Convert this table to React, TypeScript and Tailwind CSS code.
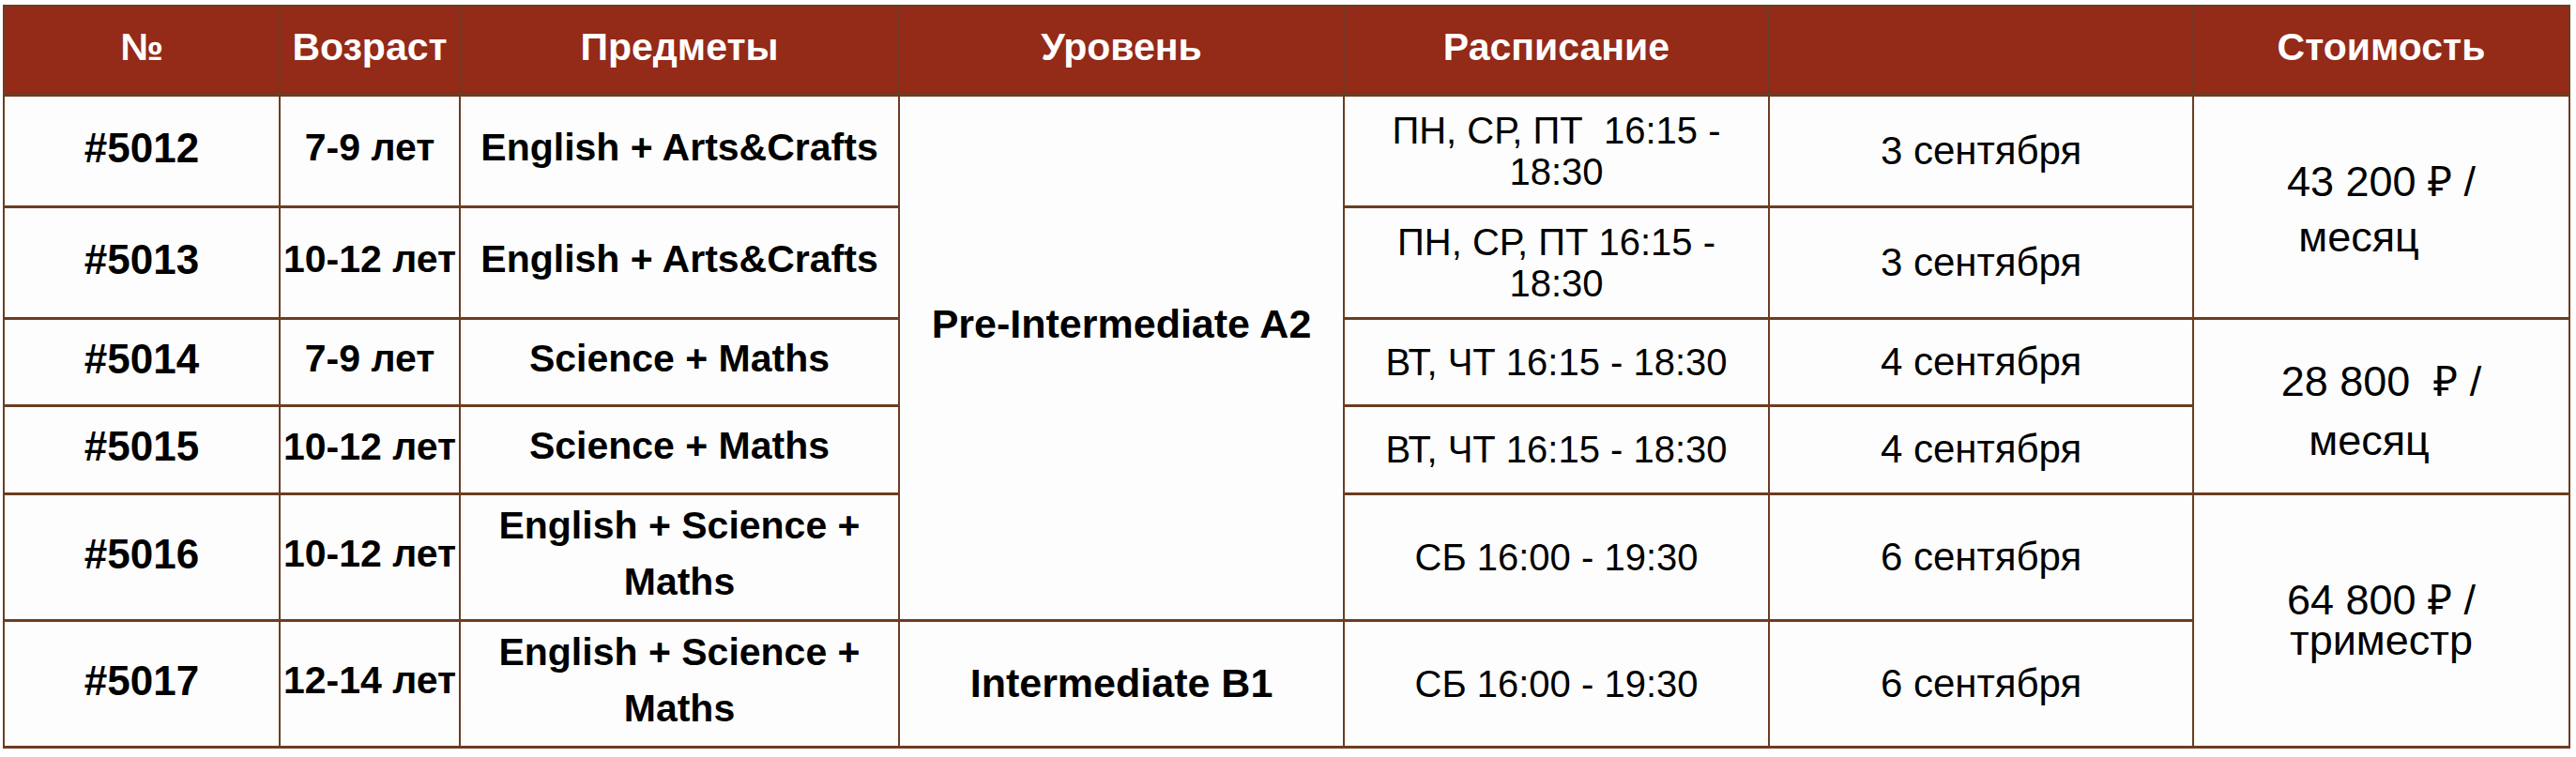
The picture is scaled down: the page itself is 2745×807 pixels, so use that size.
import React from "react";

const font = "font-['Liberation_Sans',Arial,sans-serif]";
const cell =
  "border-x-2 border-y-[3px] border-[#6b3d22] bg-[#fdfdfd] text-center align-middle p-0 text-black";
const head =
  "border-x-2 border-y-2 border-[#6b3d22] bg-[#942a18] text-center align-middle p-0 text-white font-bold text-[41px] leading-none";

const idC = `${cell} font-bold text-[44px] leading-none`;
const ageC = `${cell} font-bold text-[41px] leading-none whitespace-nowrap`;
const subjC = `${cell} font-bold text-[41px] leading-[60px] pb-[8px]`;
const schedC = `${cell} text-[40px] leading-[44px]`;
const dateC = `${cell} text-[42px] leading-none`;
const priceC = `${cell} text-[45px]`;

export default function App() {
  return (
    <div className={`${font} bg-white w-[2745px] h-[807px] pt-[5px] pl-[3px]`}>
      <table className="table-fixed border-collapse w-[2736px]">
        <colgroup>
          <col className="w-[294px]" />
          <col className="w-[192px]" />
          <col className="w-[468px]" />
          <col className="w-[474px]" />
          <col className="w-[453px]" />
          <col className="w-[452px]" />
          <col className="w-[401px]" />
        </colgroup>
        <thead>
          <tr className="h-[95px]">
            <th className={`${head} pb-[6px]`}>№</th>
            <th className={`${head} pb-[6px]`}>Возраст</th>
            <th className={`${head} pb-[6px]`}>Предметы</th>
            <th className={`${head} pb-[6px]`}>Уровень</th>
            <th className={`${head} pb-[6px]`}>Расписание</th>
            <th className={head}></th>
            <th className={`${head} pb-[6px]`}>Стоимость</th>
          </tr>
        </thead>
        <tbody>
          <tr className="h-[119px]">
            <td className={`${idC} pb-[6px]`}>#5012</td>
            <td className={`${ageC} pb-[6px]`}>7-9 лет</td>
            <td className={subjC}>English + Arts&amp;Crafts</td>
            <td rowSpan={5} className={`${cell} font-bold text-[43px] leading-none pb-[72px]`}>
              Pre-Intermediate A2
            </td>
            <td className={schedC}>
              <span className="whitespace-pre">{"ПН, СР, ПТ  16:15 -"}</span>
              <br />
              18:30
            </td>
            <td className={dateC}>3 сентября</td>
            <td rowSpan={2} className={`${priceC} leading-[59px] pt-[6px]`}>
              <div>43 200 ₽ /</div>
              <div className="pr-[48px]">месяц</div>
            </td>
          </tr>
          <tr className="h-[119px]">
            <td className={`${idC} pb-[6px]`}>#5013</td>
            <td className={`${ageC} pb-[6px]`}>10-12 лет</td>
            <td className={subjC}>English + Arts&amp;Crafts</td>
            <td className={schedC}>
              ПН, СР, ПТ 16:15 -
              <br />
              18:30
            </td>
            <td className={dateC}>3 сентября</td>
          </tr>
          <tr className="h-[93px]">
            <td className={`${idC} pb-[6px]`}>#5014</td>
            <td className={`${ageC} pb-[6px]`}>7-9 лет</td>
            <td className={subjC}>Science + Maths</td>
            <td className={schedC}>ВТ, ЧТ 16:15 - 18:30</td>
            <td className={dateC}>4 сентября</td>
            <td rowSpan={2} className={`${priceC} leading-[63px] pt-[10px]`}>
              <div className="whitespace-pre">{"28 800  ₽ /"}</div>
              <div className="pr-[26px]">месяц</div>
            </td>
          </tr>
          <tr className="h-[94px]">
            <td className={`${idC} pb-[6px]`}>#5015</td>
            <td className={`${ageC} pb-[6px]`}>10-12 лет</td>
            <td className={subjC}>Science + Maths</td>
            <td className={schedC}>ВТ, ЧТ 16:15 - 18:30</td>
            <td className={dateC}>4 сентября</td>
          </tr>
          <tr className="h-[135px]">
            <td className={`${idC} pb-[6px]`}>#5016</td>
            <td className={`${ageC} pb-[6px]`}>10-12 лет</td>
            <td className={subjC}>
              English + Science +
              <br />
              Maths
            </td>
            <td className={schedC}>СБ 16:00 - 19:30</td>
            <td className={dateC}>6 сентября</td>
            <td rowSpan={2} className={`${priceC} leading-[43px]`}>
              <div>64 800 ₽ /</div>
              <div>триместр</div>
            </td>
          </tr>
          <tr className="h-[135px]">
            <td className={`${idC} pb-[6px]`}>#5017</td>
            <td className={`${ageC} pb-[6px]`}>12-14 лет</td>
            <td className={subjC}>
              English + Science +
              <br />
              Maths
            </td>
            <td className={`${cell} font-bold text-[43px] leading-none`}>Intermediate B1</td>
            <td className={schedC}>СБ 16:00 - 19:30</td>
            <td className={dateC}>6 сентября</td>
          </tr>
        </tbody>
      </table>
    </div>
  );
}
